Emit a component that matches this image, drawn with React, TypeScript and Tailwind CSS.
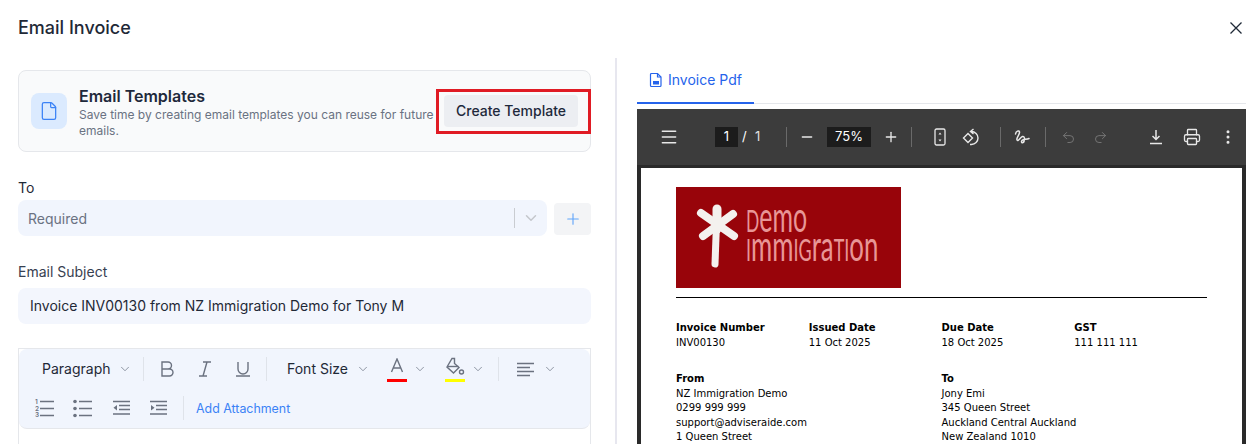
import { ChevronDown, EllipsisVertical, File, Menu, Minus, Plus, Printer, Redo2, Undo2 } from 'lucide-react';

function Chevron() {
  return <ChevronDown size={14} strokeWidth={1.25} className="text-gray-500" />;
}

function FileTabIcon() {
  return (
    <svg width="14" height="16" viewBox="0 0 14 16" fill="none" stroke="#2563eb" strokeWidth="1.2">
      <path d="M2.5 1.500h6l3.500 3.500v8.500a1 1 0 0 1-1 1h-8.500a1 1 0 0 1-1-1v-11a1 1 0 0 1 1-1z" />
      <path d="M8.500 1.500v3.500h3.500" />
      <path d="M4 9h6v3.500h-6z" fill="#2563eb" stroke="none" />
    </svg>
  );
}

function Logo() {
  const caps = 30;
  const lower = 43;
  return (
    <svg width="225" height="101" viewBox="0 0 225 101" className="block">
      <rect width="225" height="101" fill="#98040a" />
      <g stroke="#f4f1ee" strokeLinecap="round" fill="none">
        <path d="M41 23 L39 77" strokeWidth="7" />
        <path d="M41 22 L41 42" strokeWidth="9" />
        <path d="M25 26 L58 49" strokeWidth="8" />
        <path d="M57 27 L27 49" strokeWidth="8" />
      </g>
      <g fontFamily="Lato, sans-serif" fill="#e89696">
        <text transform="translate(70 45) scale(0.58 1)">
          <tspan fontSize={caps}>D</tspan>
          <tspan fontSize={lower}>emo</tspan>
        </text>
        <text transform="translate(70 74) scale(0.6 1)">
          <tspan fontSize={caps}>I</tspan>
          <tspan fontSize={lower}>mm</tspan>
          <tspan fontSize={caps}>IG</tspan>
          <tspan fontSize={lower}>ra</tspan>
          <tspan fontSize={caps}>TI</tspan>
          <tspan fontSize={lower}>on</tspan>
        </text>
      </g>
    </svg>
  );
}

function PdfToolbar() {
  return (
    <div className="flex h-[56px] shrink-0 items-center bg-[#3c3c3c] text-[13px] text-white">
      <Menu size={20} strokeWidth={1.75} className="ml-[22px] text-[#e8e8e8]" />
      <div className="ml-[36px] flex h-[20px] w-[23px] items-center justify-center bg-[#1c1c1c]">1</div>
      <span className="ml-[4px] w-[10px]">/</span>
      <span className="ml-[3px] w-[31px] text-[#e0e0e0]">1</span>
      <div className="h-[20px] w-px bg-[#6a6a6a]" />
      <Minus size={16} strokeWidth={2} className="ml-[12px] text-[#e8e8e8]" />
      <div className="ml-[12px] flex h-[20px] w-[44px] items-center justify-center bg-[#1c1c1c]">75%</div>
      <Plus size={16} strokeWidth={2} className="ml-[12px] text-[#e8e8e8]" />
      <div className="ml-[12px] h-[20px] w-px bg-[#6a6a6a]" />
      <svg width="12" height="18" viewBox="0 0 12 18" fill="none" stroke="#e8e8e8" strokeWidth="1.300" className="ml-[22px]">
        <rect x="1" y="1" width="10" height="16" rx="1.500" />
        <path d="M6 4.500l-1.500 2h3z M6 13.500l-1.500-2h3z" fill="#e8e8e8" stroke="none" />
      </svg>
      <svg width="18" height="18" viewBox="0 0 18 18" fill="none" stroke="#e8e8e8" strokeWidth="1.400" className="ml-[16px]">
        <path d="M6 5.500l-4.500 4.500 4.500 4.500 4.500-4.500z" />
        <path d="M8.500 3.500h1a6.500 6.500 0 0 1 0 13h-1.500M11.500 1L8.500 3.500 11.500 6" />
      </svg>
      <div className="ml-[20px] h-[20px] w-px bg-[#6a6a6a]" />
      <svg width="16" height="16" viewBox="0 0 16 16" fill="none" stroke="#e8e8e8" strokeWidth="1.500" strokeLinecap="round" className="ml-[13px]">
        <path d="M1.500 5C2 2 5 1 5.500 3 6 5.500 2 8.500 3 11c1 2 3.500-3 5.500-3.500 2-.5 2.500 2.500 1.500 5-1.500 2.500-3.500 1-2-1 1.500-2 4.500-.5 7-2" />
      </svg>
      <div className="ml-[15px] h-[20px] w-px bg-[#6a6a6a]" />
      <Undo2 size={15} strokeWidth={1.500} className="ml-[15px] text-[#777777]" />
      <Redo2 size={15} strokeWidth={1.500} className="ml-[17px] text-[#777777]" />
      <svg width="16" height="16" viewBox="0 0 16 16" fill="none" stroke="#e8e8e8" strokeWidth="1.500" className="ml-[40px]">
        <path d="M8 1v9.500M4.500 7l3.500 3.500L11.500 7M2 14.500h12" />
      </svg>
      <Printer size={18} strokeWidth={1.75} className="ml-[19px] text-[#e8e8e8]" />
      <EllipsisVertical size={18} strokeWidth={2} className="ml-[18px] text-[#e8e8e8]" />
    </div>
  );
}

function PdfField({ label, lines }: { label: string; lines: string[] }) {
  return (
    <div>
      <div className="mb-px h-[15px] font-bold leading-[15px]">{label}</div>
      {lines.map((line) => (
        <div key={line} className="h-[14.600px] leading-[14.600px]">{line}</div>
      ))}
    </div>
  );
}

function PdfPage() {
  return (
    <div className="mx-[4px] mt-[3px] flex-1 bg-white pl-[35px] pr-[35px] pt-[19px] font-['DejaVu_Sans',sans-serif] text-[10px] text-black">
      <Logo />
      <div className="mt-[9px] h-px w-[531px] bg-black" />
      <div className="mt-[22px] grid w-[531px] grid-cols-4">
        <PdfField label="Invoice Number" lines={['INV00130']} />
        <PdfField label="Issued Date" lines={['11 Oct 2025']} />
        <PdfField label="Due Date" lines={['18 Oct 2025']} />
        <PdfField label="GST" lines={['111 111 111']} />
      </div>
      <div className="mt-[20px] grid w-[531px] grid-cols-2">
        <PdfField label="From" lines={['NZ Immigration Demo', '0299 999 999', 'support@adviseraide.com', '1 Queen Street']} />
        <PdfField label="To" lines={['Jony Emi', '345 Queen Street', 'Auckland Central Auckland', 'New Zealand 1010']} />
      </div>
    </div>
  );
}

function Sep({ className }: { className: string }) {
  return <div className={`h-[24px] w-px bg-[#dfe3ea] ${className}`} />;
}

function EditorToolbar() {
  const draw = { fill: 'none', stroke: '#6b7280', strokeWidth: 1.4 };
  return (
    <div className="h-[80px] rounded-lg border-b border-[#e5e7eb] bg-[#f1f5fd]">
      <div className="flex h-[40px] items-center text-sm text-[#1f2937]">
        <span className="ml-[23px] w-[69px]">Paragraph</span>
        <div className="ml-[7px]"><Chevron /></div>
        <Sep className="ml-[11px]" />
        <svg width="14" height="16" viewBox="0 0 14 16" {...draw} className="ml-[16px]">
          <path d="M2 1h6a3.500 3.500 0 0 1 0 7H2zM2 8h7.500a3.500 3.500 0 0 1 0 7H2z" />
        </svg>
        <svg width="16" height="16" viewBox="0 0 16 16" {...draw} className="ml-[23px]">
          <path d="M6 1h8M2 15h8M10 1L6 15" />
        </svg>
        <svg width="16" height="16" viewBox="0 0 16 16" {...draw} className="ml-[22px]">
          <path d="M3 1v7a5 5 0 0 0 10 0V1M1 15h14" />
        </svg>
        <Sep className="ml-[15px]" />
        <span className="ml-[20px] w-[62px]">Font Size</span>
        <div className="ml-[7px]"><Chevron /></div>
        <div className="relative ml-[17px] flex h-[24px] w-[20px] justify-center pt-[1px]">
          <svg width="14" height="15" viewBox="0 0 14 15" {...draw}><path d="M1.500 14L7 1l5.500 13M3.300 10h7.400" /></svg>
          <div className="absolute bottom-[-1px] left-0 h-[3px] w-[20px] bg-[#ff0000]" />
        </div>
        <div className="ml-[6px]"><Chevron /></div>
        <div className="relative ml-[18px] flex h-[24px] w-[20px] justify-center">
          <svg width="20" height="19" viewBox="0 0 20 19" {...draw}>
            <path d="M7 1.500h2.500v5l4.500 4-5.500 5.500-6.500-6z" />
            <path d="M2.500 9.500h11" />
            <circle cx="16.500" cy="15" r="2" />
          </svg>
          <div className="absolute bottom-[-1px] left-0 h-[3px] w-[20px] bg-[#ffff00]" />
        </div>
        <div className="ml-[6px]"><Chevron /></div>
        <Sep className="ml-[13px]" />
        <svg width="18" height="15" viewBox="0 0 18 15" fill="none" stroke="#6b7280" strokeWidth="1.700" className="ml-[18px]">
          <path d="M0 1.500h17M0 5.500h13M0 9.500h17M0 13.500h13" />
        </svg>
        <div className="ml-[8px]"><Chevron /></div>
      </div>
      <div className="flex h-[38px] items-center">
        <svg width="20" height="20" viewBox="0 0 20 20" className="ml-[16px]">
          <g fill="#6b7280" fontFamily="Inter, sans-serif" fontSize="6.500" fontWeight="600">
            <text x="0" y="6">1</text>
            <text x="0" y="12.500">2</text>
            <text x="0" y="19">3</text>
          </g>
          <path d="M5 3.500h14M5 10.500h14M5 17.500h14" stroke="#6b7280" strokeWidth="1.700" />
        </svg>
        <svg width="20" height="20" viewBox="0 0 20 20" className="ml-[18px]">
          <g fill="#6b7280">
            <circle cx="2" cy="3.500" r="1.800" />
            <circle cx="2" cy="10.500" r="1.800" />
            <circle cx="2" cy="17.500" r="1.800" />
          </g>
          <path d="M6 3.500h13M6 10.500h13M6 17.500h13" stroke="#6b7280" strokeWidth="1.700" />
        </svg>
        <svg width="17" height="16" viewBox="0 0 17 16" className="ml-[20px]">
          <path d="M0 1.500h17M6 5.500h11M6 9.500h11M0 14h17" stroke="#6b7280" strokeWidth="1.700" />
          <path d="M4 5v5.500L0.500 7.700z" fill="#6b7280" />
        </svg>
        <svg width="17" height="16" viewBox="0 0 17 16" className="ml-[20px]">
          <path d="M0 1.500h17M6 5.500h11M6 9.500h11M0 14h17" stroke="#6b7280" strokeWidth="1.700" />
          <path d="M1 5v5.500L4.500 7.700z" fill="#6b7280" />
        </svg>
        <Sep className="ml-[16px]" />
        <span className="ml-[12px] pt-[2px] text-[12.400px] text-[#3b82f6]">Add Attachment</span>
      </div>
    </div>
  );
}

export default function App() {
  return (
    <div className="relative flex h-[444px] w-[1246px] flex-col overflow-hidden bg-white font-['Inter',sans-serif]">
      <div className="flex h-[58px] shrink-0 items-center justify-between pb-[2px] pl-[18px] pr-[3px]">
        <h2 className="text-lg font-medium text-[#1f2937]">Email Invoice</h2>
        <svg width="14" height="14" viewBox="0 0 14 14" fill="none" stroke="#1f2937" strokeWidth="1.300">
          <path d="M1.500 1.500l11 11M12.500 1.500l-11 11" />
        </svg>
      </div>
      <div className="flex min-h-0 flex-1">
        <div className="w-[615px] shrink-0 pl-[18px] pr-[24px] pt-[12px]">
          <div className="relative flex h-[82px] items-center rounded-lg border border-[#e5e7eb] bg-[#f9fafb] pl-[12px] pr-[12px]">
            <div className="flex h-[36px] w-[36px] shrink-0 items-center justify-center rounded-lg bg-[#dbeafe]">
              <File size={20} strokeWidth={1.500} className="text-[#3b82f6]" />
            </div>
            <div className="ml-[12px] w-[364px] shrink-0 pt-[3px]">
              <div className="text-base font-semibold leading-[20px] text-[#1e293b]">Email Templates</div>
              <p className="mt-px text-xs leading-[16px] text-gray-500">Save time by creating email templates you can reuse for future emails.</p>
            </div>
            <button className="ml-[1px] h-[32px] w-[134px] rounded bg-[#eceef2] text-sm font-medium text-[#1e293b]">Create Template</button>
            <div className="absolute left-[417px] top-[18px] h-[45px] w-[155px] border-[3px] border-[#e01b24]" />
          </div>
          <label className="mt-[26px] block h-[20px] text-sm leading-[20px] text-[#1f2937]">To</label>
          <div className="mt-[2px] flex items-center">
            <div className="flex h-[36px] w-[529px] items-center rounded-lg bg-[#f1f5fd] pl-[10px] text-sm text-gray-500">
              <span className="flex-1 pt-px">Required</span>
              <div className="h-[20px] w-px bg-[#c9ccd1]" />
              <ChevronDown size={18} strokeWidth={2} className="mx-[7px] text-[#c4c7cc]" />
            </div>
            <button className="ml-[7px] mt-[2px] flex h-[32px] w-[37px] items-center justify-center rounded bg-[#f3f4f6]">
              <Plus size={18} strokeWidth={1.500} className="text-[#60a5fa]" />
            </button>
          </div>
          <label className="mt-[26px] block h-[20px] text-sm leading-[20px] text-[#374151]">Email Subject</label>
          <div className="mt-[6px] flex h-[36px] items-center rounded-lg bg-[#f3f6fd] pl-[12px] text-sm text-[#1f2937]">Invoice INV00130 from NZ Immigration Demo for Tony M</div>
          <div className="mt-[24px] h-[200px] border border-[#e5e7eb]">
            <EditorToolbar />
          </div>
        </div>
        <div className="h-full w-[2px] shrink-0 bg-[#e7e7ef]" />
        <div className="ml-[20px] flex min-w-0 flex-1 flex-col">
          <div className="flex h-[46px] shrink-0 border-b border-[#e5e7eb]">
            <div className="flex h-[46px] w-[117px] items-center justify-center gap-[5px] border-b-2 border-[#2563eb] pb-[1px] text-sm text-[#2563eb]">
              <FileTabIcon />
              Invoice Pdf
            </div>
          </div>
          <div className="mt-[5px] flex min-h-0 flex-1 flex-col bg-[#2a2a2a]">
            <PdfToolbar />
            <PdfPage />
          </div>
        </div>
      </div>
    </div>
  );
}
